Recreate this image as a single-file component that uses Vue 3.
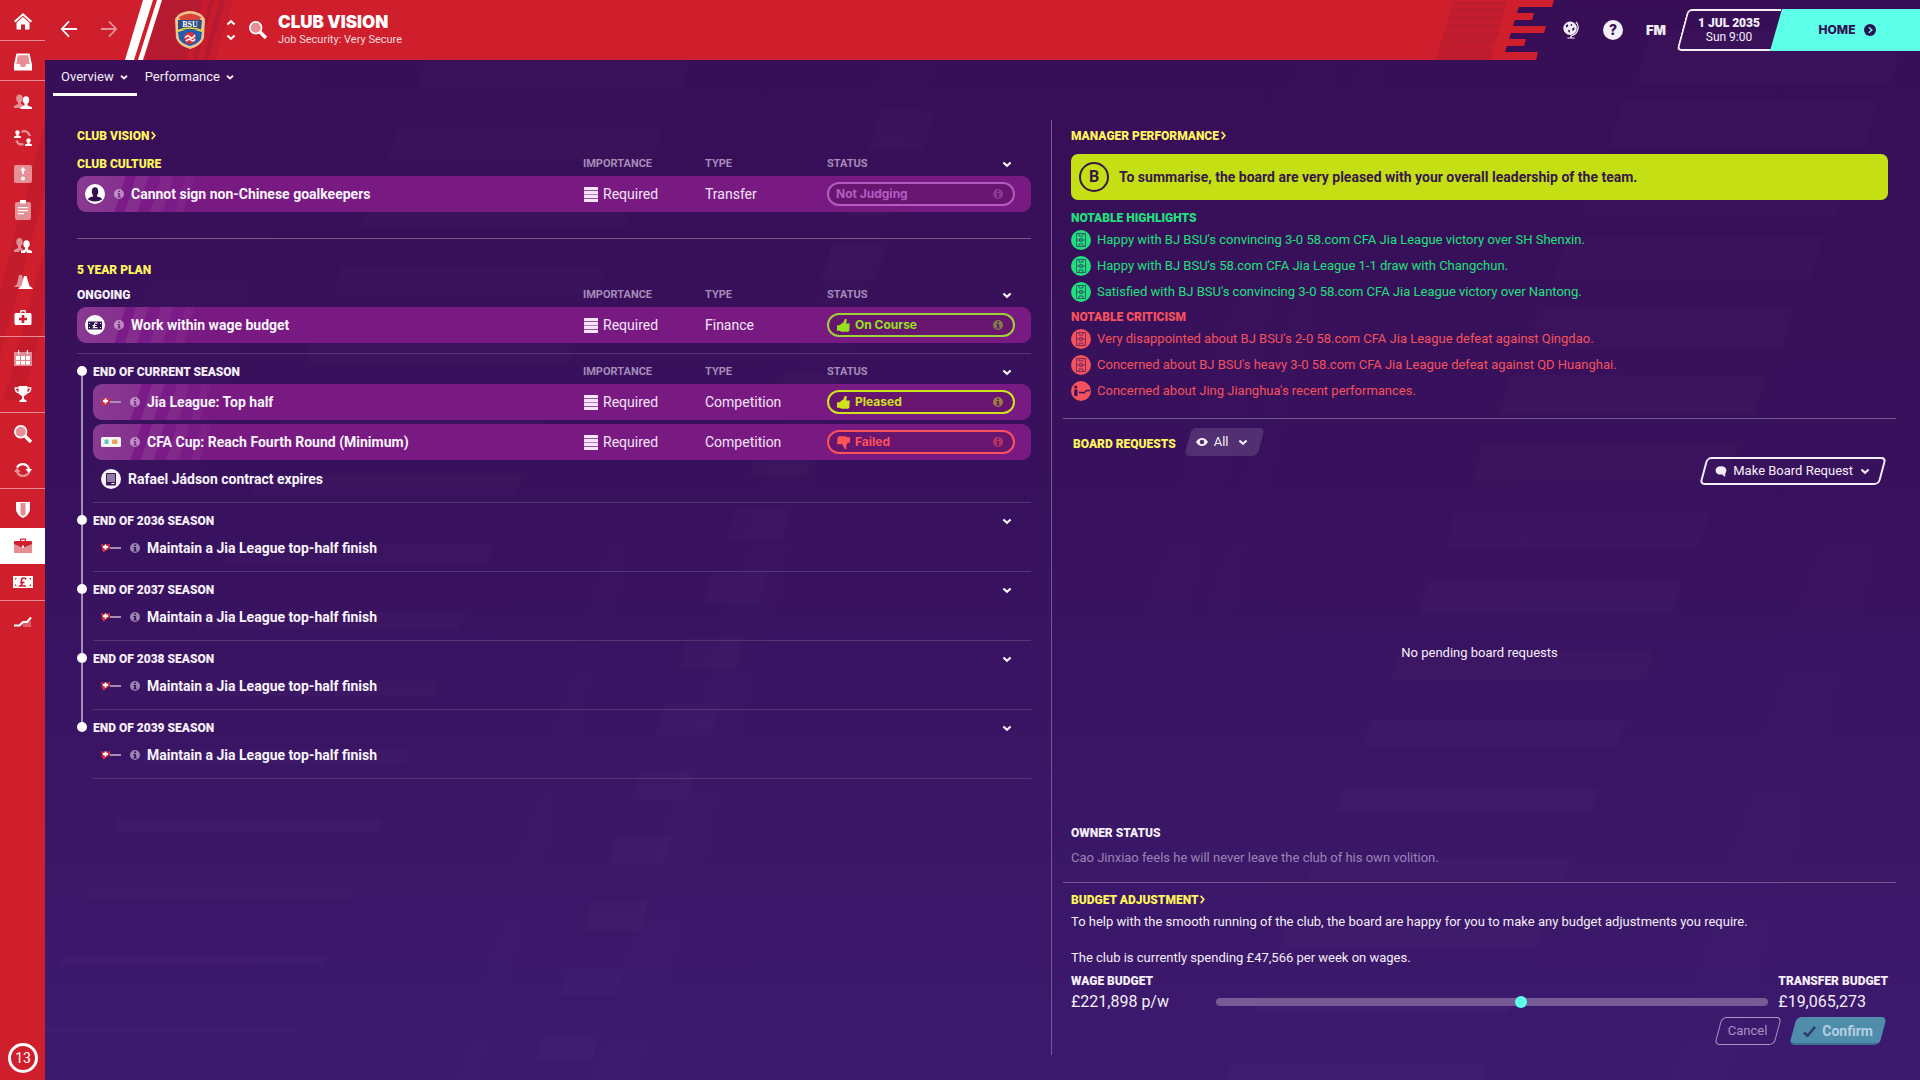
<script setup>
import { ref } from 'vue'

// icon bodies, drawn in a 20x20 box
const icons = {
  home: '<path d="M10 1 19 9l-1.300 1.500L10 3.800 2.300 10.500 1 9z"/><path d="M10 5l6.500 5.800V17.500h-4.500v-5H8v5H3.500v-6.700z"/>',
  inbox: '<path fill-rule="evenodd" d="M3.500 1.500h13l2.500 11v6H1v-6zM5 3.500 3.500 12H7c0 4 6 4 6 0h3.500L15 3.500z"/><path opacity=".5" d="M5 3.500h10L16.500 12H13c0 4-6 4-6 0H3.500z"/>',
  people: '<g opacity=".5"><ellipse cx="6.500" cy="6.500" rx="3.300" ry="4"/><path d="M5 9h3v3l3 1.500V16H1v-2l4-2z"/></g><ellipse cx="13" cy="8" rx="3.200" ry="3.800"/><path d="M11.500 11h3v2.500l4.500 1.700V17H7.500v-1.800l4-1.700z"/>',
  swap: '<circle cx="4.500" cy="4.500" r="2.200"/><path d="M3.500 6h2v1.500L8 8.500V10H1V8.500l2.500-1z"/><circle cx="15.500" cy="12.500" r="2.200"/><path d="M14.500 14h2v1.500l2.500 1V18h-7v-1.500l2.500-1z"/><path d="M8.500 4c4-2 7 0 8.500 4M10.500 16c-4 1.500-6-1-7-3.500" fill="none" stroke="currentColor" stroke-width="2.200" opacity=".5"/>',
  tactic: '<rect x="1" y="1" width="18" height="18" rx="2" opacity=".5"/><path d="M10 3l3 3.500h-2V10H9V6.500H7z"/><circle cx="10" cy="14.500" r="2"/>',
  report: '<rect x="2" y="2" width="16" height="18" rx="2" opacity=".5"/><rect x="7" y="0" width="6" height="3.500"/><path d="M5 7h10v1.200H5zM5 10h10v1.200H5zM5 13h6v1.200H5z"/>',
  staff: '<g opacity=".5"><ellipse cx="6.500" cy="6" rx="3.200" ry="4"/><path d="M5 9h3v3l2 1-1 3-2-2-1 2H1v-2l4-2z"/></g><ellipse cx="13.500" cy="8" rx="3.200" ry="3.800"/><path d="M12 11h3v2.500l4 1.500v2h-5l-1-2-1 2H8v-2l4-1.500z"/>',
  training: '<path opacity=".5" d="M6 3h3l2 9-3 3H1l3-3z"/><path d="M11 4h2.500l3 10 3 2v1H5.500v-1l3-2z"/>',
  medical: '<path fill-rule="evenodd" d="M7 5V3.500Q7 2 8.500 2h3Q13 2 13 3.500V5h4q1.500 0 1.500 1.500v9Q18.500 17 17 17H3q-1.500 0-1.500-1.500v-9Q1.500 5 3 5zm1.200 0h3.600V3.500H8.200zM8.700 7v2.700H6v2.600h2.700V15h2.600v-2.700H14V9.700h-2.700V7z"/>',
  calendar: '<path opacity=".5" d="M1 4h18v14H1z"/><path d="M5 2h1.200v4H5zM13.800 2H15v4h-1.200zM3 8h4v4H3zM8 8h4v4H8zM13 8h4v4h-4zM3 13h4v3.500H3zM8 13h4v3.500H8zM13 13h4v3.500h-4z"/>',
  trophy: '<path d="M5.500 2h9v5q0 4-3.500 5v3l2.500 1.500V18h-7v-1.500L9 15v-3Q5.500 11 5.500 7z"/><path d="M5.500 4H2.300Q2 8 6.500 9M14.500 4h3.200Q18 8 13.500 9" fill="none" stroke="currentColor" stroke-width="1.400"/>',
  search: '<circle cx="7.700" cy="7.700" r="5" opacity=".5"/><path d="M12 12l6 6" stroke="currentColor" stroke-width="3.400"/><circle cx="7.700" cy="7.700" r="5.800" fill="none" stroke="currentColor" stroke-width="1.800"/>',
  refresh: '<path d="M4 7.500C7 2.500 14 3 16 9" fill="none" stroke="currentColor" stroke-width="2.200"/><path d="M12.500 9H19l-3 4.500z"/><g opacity=".5"><path d="M16 12.500C13 17.500 6 17 4 11.500" fill="none" stroke="currentColor" stroke-width="2.200"/><path d="M1 12h6.500L4 7.500z"/></g>',
  shield: '<path d="M3 2h14v8q-1 5-7 8-6-3-7-8z"/><path d="M7.500 3h5v11.500L10 16l-2.500-1.500z" fill="#e68a93"/>',
  briefcase: '<path opacity=".5" d="M1 7l9 5 9-5v10H1z"/><path fill-rule="evenodd" d="M7 5V3.500Q7 2.500 8 2.500h4q1 0 1 1V5h5q1 0 1 1v2l-8 3.500V9.500H9v2L1 8V6q0-1 1-1zm1.200 0h3.600V3.700H8.200z"/>',
  money: '<path fill-rule="evenodd" d="M0 4h20v12H0zM2 6v2l2-2zm0 8h2l-2-2zM18 6h-2l2 2zm0 8v-2l-2 2z"/><path d="M13 7.500Q12.500 6 10.700 6 8.300 6 8.500 8.500L9 11q.2 2-1.500 3H13M7 10.500h4.500" fill="none" stroke="#cf1e2c" stroke-width="1.700"/>',
  chart: '<path opacity=".3" d="M10 9h8v6h-8z"/><path d="M1 13.500h5.500L10 10h4l4-4.500" fill="none" stroke="currentColor" stroke-width="2.200"/>',
  chevron: '<path d="M4 7.500 10 13l6-5.500" fill="none" stroke="currentColor" stroke-width="3.400"/>',
  more: '<path d="M6 2l7 8-7 8" fill="none" stroke="currentColor" stroke-width="3.600"/>',
  back: '<path d="M19 10H2M10 1.500 2 10l8 8.500" fill="none" stroke="currentColor" stroke-width="2"/>',
  forward: '<path d="M1 10h17M10 1.500 18 10l-8 8.500" fill="none" stroke="currentColor" stroke-width="2"/>',
  info: '<path fill-rule="evenodd" d="M10 0a10 10 0 1 0 0 20 10 10 0 0 0 0-20zM8.300 3h3.800v3H8.300zM6.500 8h5.600v7h1.400v2H6.500v-2h1.800v-5H6.500z"/>',
  bars: '<path d="M0 0h20v4.400H0zM0 5.200h20v4.400H0zM0 10.400h20v4.400H0zM0 15.600h20V20H0z"/>',
  thumbUp: '<path d="M0 9.500h3.500L10 5l2-5h2.500l.5 2-1 5h5.500L19 18l-2 1.500H7L4 18H0z"/>',
  thumbDown: '<path d="M20 10.500h-3.500L14 15l1 5h-3l-4-7.500H1L0 11 1 2l2-1.500h10L16 2h4z"/>',
  eye: '<path fill-rule="evenodd" d="M0 10Q4 3.500 10 3.500T20 10q-4 6.500-10 6.500T0 10zm10-3.800a3.800 3.800 0 1 0 0 7.600 3.800 3.800 0 0 0 0-7.600z"/>',
  bubble: '<path d="M10 2c6 0 9 3 9 7q0 3-2 5v6l-5-4H10c-6 0-9-3-9-7s3-7 9-7z"/>',
  check: '<path d="M1.500 11.500 7 16.500 18.500 3" fill="none" stroke="currentColor" stroke-width="4"/>',
  globe: '<path fill-rule="evenodd" d="M9 .5a7.500 7.500 0 1 0 0 15 7.500 7.500 0 0 0 0-15zM4 5l2.500-1.500.5 2L5 7.500zm6-2 1.500 1-.5 1.500-1.500-.5zM7 9.500l2 1-.5 2.500-1.500-1zM11.500 8l2.500-1-.5 3-2 1z"/><path d="M15.500 1q4 4.500 1.500 10-2 4.500-7 5.500" fill="none" stroke="currentColor" stroke-width="1.400"/><path d="M9.300 16h1.400v2.200H14v1.300H6v-1.300h3.300z"/>',
  person: '<circle cx="10" cy="10" r="10" fill="#fff"/><ellipse cx="10" cy="7.500" rx="3.200" ry="4.300" fill="#33104f"/><path d="M8 10h4v2.500q5 1 5 3-3 2-7 2t-7-2q0-2 5-3z" fill="#33104f"/>',
  wage: '<circle cx="10" cy="10" r="10" fill="#fff"/><path d="M3 6.500h14v8H3z" fill="#33104f"/><path d="M12.500 8.300q-3-1.300-3 1.200 0 2-1 3.200h4M7.500 10.500h4" fill="none" stroke="#fff" stroke-width="1.200"/><path d="M4.500 8v1M4.500 12v1M15.500 8v1M15.500 12v1" stroke="#fff"/>',
  contract: '<circle cx="10" cy="10" r="10" fill="#f8f4fa"/><rect x="5" y="4" width="10" height="12.500" rx="1" fill="#3a1659"/><path d="M6 5h8v8H6z" fill="#8f7ba6"/><path d="M10.500 14.500h3" stroke="#fff"/>',
  league: '<path d="M0 6l3.500 1L9 6v4l-5 3-1 2-2-3z" fill="#d5303c"/><path d="M4.500 6.500v5M2 9h5" stroke="#fff" stroke-width="1.800"/><path d="M9 10h11" stroke="#b19ac0" stroke-width="1.800"/>',
  cup: '<rect x="0" y="5" width="20" height="10" rx="1.500" fill="#f6f4f4"/><rect x="3.500" y="7.500" width="4" height="4.500" rx="1" fill="#5cc7bd"/><rect x="11" y="7.500" width="5.500" height="4.500" rx="1" fill="#e9a461"/>',
  pitch: '<circle cx="10" cy="10" r="10"/><g fill="none" stroke="#37105a" stroke-width="1" opacity=".6"><path d="M5.500 3.500h9v13h-9zM5.500 10h9M8 3.500V6h4V3.500M8 16.500V14h4v2.500"/><circle cx="10" cy="10" r="1.800"/></g>',
  form: '<circle cx="10" cy="10" r="10"/><g fill="#37105a"><circle cx="4.800" cy="6" r="1.600"/><path d="M3.200 8.500h3.300V15H3.200z"/></g><path d="M8 11.500h3l2 .500 2.500-2.500H19" fill="none" stroke="#37105a" stroke-width="1.300"/>'
}

const navGroups = [
  ['home'],
  ['inbox'],
  ['people', 'swap', 'tactic', 'report', 'staff', 'training', 'medical'],
  ['calendar', 'trophy'],
  ['search', 'refresh'],
  ['shield', 'briefcase', 'money'],
  ['chart']
]

const maintain = { icon: 'league', info: true, name: 'Maintain a Jia League top-half finish' }

const sections = [
  {
    heading: 'CLUB VISION',
    link: true,
    groups: [
      {
        title: 'CLUB CULTURE', columns: true, accent: true,
        goals: [{ icon: 'person', info: true, name: 'Cannot sign non-Chinese goalkeepers', importance: 'Required', type: 'Transfer', status: 'Not Judging', tone: 'idle' }]
      }
    ]
  },
  {
    heading: '5 YEAR PLAN',
    groups: [
      {
        title: 'ONGOING', columns: true,
        goals: [{ icon: 'wage', info: true, name: 'Work within wage budget', importance: 'Required', type: 'Finance', status: 'On Course', tone: 'course', thumb: 'thumbUp' }]
      },
      {
        title: 'END OF CURRENT SEASON', columns: true, season: true,
        goals: [
          { icon: 'league', info: true, name: 'Jia League: Top half', importance: 'Required', type: 'Competition', status: 'Pleased', tone: 'pleased', thumb: 'thumbUp' },
          { icon: 'cup', info: true, name: 'CFA Cup: Reach Fourth Round (Minimum)', importance: 'Required', type: 'Competition', status: 'Failed', tone: 'failed', thumb: 'thumbDown' },
          { icon: 'contract', name: 'Rafael Jádson contract expires' }
        ]
      },
      { title: 'END OF 2036 SEASON', season: true, goals: [maintain] },
      { title: 'END OF 2037 SEASON', season: true, goals: [maintain] },
      { title: 'END OF 2038 SEASON', season: true, goals: [maintain] },
      { title: 'END OF 2039 SEASON', season: true, goals: [maintain] }
    ]
  }
]

const feedback = [
  {
    title: 'NOTABLE HIGHLIGHTS', tone: 'good',
    items: [
      { icon: 'pitch', text: "Happy with BJ BSU's convincing 3-0 58.com CFA Jia League victory over SH Shenxin." },
      { icon: 'pitch', text: "Happy with BJ BSU's 58.com CFA Jia League 1-1 draw with Changchun." },
      { icon: 'pitch', text: "Satisfied with BJ BSU's convincing 3-0 58.com CFA Jia League victory over Nantong." }
    ]
  },
  {
    title: 'NOTABLE CRITICISM', tone: 'bad',
    items: [
      { icon: 'pitch', text: "Very disappointed about BJ BSU's 2-0 58.com CFA Jia League defeat against Qingdao." },
      { icon: 'pitch', text: "Concerned about BJ BSU's heavy 3-0 58.com CFA Jia League defeat against QD Huanghai." },
      { icon: 'form', text: "Concerned about Jing Jianghua's recent performances." }
    ]
  }
]

const filter = ref('All')
const budget = ref(554)

// slanted bars that step down and to the left behind the panels
const slant = (x, y, w, h) => `M${x} ${y}h${w}l${-h * 0.28} ${h}h${-w}z`
const bars = []
for (let i = 0; i < 16; i++) {
  bars.push(slant(1651 - 28 * i, 30 + 69 * i, 255, 52 - 2.5 * i))
  bars.push(slant(425 - 28 * i, 60 + 69 * i, 265, 34 - 2 * i))
  bars.push(slant(880 - 24 * i, 110 + 66 * i, 56, 40 - i))
}
const shapes = bars.join('')
const streaks = 'M210 60h110L190 520H80zM885 60h50L640 1080h-50zM1300 60h40L1180 640h-40zM1360 60h24l-160 580h-24zM1830 500h60l-160 580h-60zM620 500h24L480 1080h-24z'
</script>

<template>
  <div class="app">
    <svg class="backdrop" viewBox="0 0 1920 1080" preserveAspectRatio="xMidYMid slice">
      <path :d="shapes" />
      <path :d="streaks" opacity=".6" />
    </svg>

    <nav class="sidebar">
      <div class="nav-group" v-for="(group, i) in navGroups" :key="i">
        <button v-for="name in group" :key="name" :class="{ active: name === 'briefcase' }" :aria-label="name">
          <svg viewBox="0 0 20 20" v-html="icons[name]"></svg>
        </button>
      </div>
      <div class="timer">13</div>
    </nav>

    <div class="page">
      <header>
        <div class="club-bar">
          <button class="arrow" aria-label="Back"><svg viewBox="0 0 20 20" v-html="icons.back"></svg></button>
          <button class="arrow dim" aria-label="Forward"><svg viewBox="0 0 20 20" v-html="icons.forward"></svg></button>
          <svg class="slashes" viewBox="0 0 110 60">
            <path d="M37 0h70L90 60H19z" fill="#b51a31" />
            <path d="M78 0h7L68 60h-7zM89 0h6L78 60h-6zM100 0h7L90 60h-7z" fill="#c71c2d" />
            <path d="M18 0h10L9 60H0zM32 0h5L18 60h-5z" fill="#fff" />
          </svg>
          <svg class="crest" viewBox="0 0 32 40">
            <path d="M4 5Q16-3 28 5l3 4-1 19q-3 8-14 11Q5 36 2 28L1 9z" fill="#f0c48a" />
            <path d="M5 7q11-7 22 0l-1 3H6z" fill="#d9453b" />
            <path d="M4 10h24l-1 10H4z" fill="#2b4f86" />
            <path d="M4 22q12-5 24 0l-1 7q-3 5-11 7-8-2-11-7z" fill="#1f5fae" />
            <path d="M3 21q13-6 26 0" fill="none" stroke="#e9d533" stroke-width="1.500" />
            <circle cx="16" cy="28" r="6" fill="#dd2f35" />
            <path d="M11 28q3-4 5-1t5-2M12 31q3-3 5-1t4-1" fill="none" stroke="#fff" stroke-width="1.500" />
            <text x="16" y="17" text-anchor="middle">BSU</text>
          </svg>
          <div class="stepper">
            <button class="up" aria-label="Previous club"><svg viewBox="0 0 20 20" v-html="icons.chevron"></svg></button>
            <button aria-label="Next club"><svg viewBox="0 0 20 20" v-html="icons.chevron"></svg></button>
          </div>
          <button class="find" aria-label="Search"><svg viewBox="0 0 20 20" v-html="icons.search"></svg></button>
          <div>
            <h1>CLUB VISION</h1>
            <p class="security">Job Security: Very Secure</p>
          </div>
        </div>
        <svg class="torn-edge" viewBox="0 0 134 60">
          <path d="M0 0h134l-2 7h-33l-2 6h17l-2 7h-17l-2 6h33l-2 7h-33l-2 6h17l-2 7h-17l-2 6h33l-2 8H0z" fill="#cf1e2c" />
          <path d="M33 1h54L70 60H16z" fill="#c51d2d" />
          <path d="M33 1h54l-1 4H32zM31 8h54l-1 5H30zM29 16h54l-1 5H28zM27 24h54l-1 5H26zM25 32h54l-2 5H23zM23 39h53l-1 5H21zM20 47h53l-1 5H19zM18 54h53l-2 6H16z" fill="#bd1d2e" />
        </svg>
        <div class="tools">
          <button class="globe" aria-label="World"><svg viewBox="0 0 20 20" v-html="icons.globe"></svg></button>
          <button class="help">?</button>
          <button class="fm">FM</button>
        </div>
        <div class="date">
          <strong>1 JUL 2035</strong>
          <span>Sun 9:00</span>
        </div>
        <button class="continue">HOME
          <svg viewBox="0 0 20 20"><circle cx="10" cy="10" r="10" /><path d="M8 5.500l5 4.500-5 4.500" fill="none" stroke="#5effe8" stroke-width="2.500" /></svg>
        </button>
      </header>

      <div class="tabs">
        <a href="#" class="current">Overview <svg viewBox="0 0 20 20" v-html="icons.chevron"></svg></a>
        <a href="#">Performance <svg viewBox="0 0 20 20" v-html="icons.chevron"></svg></a>
      </div>

      <main>
        <div class="vision">
          <section v-for="section in sections" :key="section.heading">
            <h2 :class="{ spaced: section.link }">
              <a v-if="section.link" href="#">{{ section.heading }} <svg viewBox="0 0 20 20" v-html="icons.more"></svg></a>
              <template v-else>{{ section.heading }}</template>
            </h2>
            <div class="group" :class="{ season: group.season }" v-for="group in section.groups" :key="group.title">
              <div class="rail" v-if="group.season"><i></i><b></b><i></i></div>
              <table>
                <thead>
                  <tr>
                    <th class="title" :class="{ accent: group.accent }">{{ group.title }}</th>
                    <th>{{ group.columns ? 'IMPORTANCE' : '' }}</th>
                    <th>{{ group.columns ? 'TYPE' : '' }}</th>
                    <th class="last">{{ group.columns ? 'STATUS' : '' }}
                      <button :aria-label="'Collapse ' + group.title"><svg viewBox="0 0 20 20" v-html="icons.chevron"></svg></button>
                    </th>
                  </tr>
                </thead>
                <tbody>
                  <tr v-for="goal in group.goals" :key="goal.name" :class="{ card: goal.status }">
                    <td class="name">
                      <svg class="badge" viewBox="0 0 20 20" v-html="icons[goal.icon]"></svg>
                      <svg class="info" v-if="goal.info" viewBox="0 0 20 20" v-html="icons.info"></svg>
                      <span>{{ goal.name }}</span>
                    </td>
                    <template v-if="goal.status">
                      <td><svg class="level" viewBox="0 0 20 20" preserveAspectRatio="none" v-html="icons.bars"></svg>{{ goal.importance }}</td>
                      <td>{{ goal.type }}</td>
                      <td>
                        <div class="status" :class="goal.tone">
                          <svg class="thumb" v-if="goal.thumb" viewBox="0 0 20 20" v-html="icons[goal.thumb]"></svg>
                          {{ goal.status }}
                          <svg class="info" viewBox="0 0 20 20" v-html="icons.info"></svg>
                        </div>
                      </td>
                    </template>
                  </tr>
                </tbody>
              </table>
            </div>
          </section>
        </div>

        <div class="board">
          <section class="performance">
            <h2><a href="#">MANAGER PERFORMANCE <svg viewBox="0 0 20 20" v-html="icons.more"></svg></a></h2>
            <div class="summary">
              <span class="grade">B</span>
              To summarise, the board are very pleased with your overall leadership of the team.
            </div>
            <div class="feedback" :class="block.tone" v-for="block in feedback" :key="block.title">
              <h3>{{ block.title }}</h3>
              <p v-for="item in block.items" :key="item.text">
                <svg viewBox="0 0 20 20" v-html="icons[item.icon]"></svg>{{ item.text }}
              </p>
            </div>
          </section>

          <section class="requests">
            <div class="requests-head">
              <h2>BOARD REQUESTS</h2>
              <label class="filter">
                <svg viewBox="0 0 20 20" v-html="icons.eye"></svg>
                <select v-model="filter" aria-label="Filter board requests"><option>All</option></select>
                <svg viewBox="0 0 20 20" v-html="icons.chevron"></svg>
              </label>
            </div>
            <button class="outline make">
              <svg viewBox="0 0 20 20" v-html="icons.bubble"></svg>
              Make Board Request
              <svg viewBox="0 0 20 20" v-html="icons.chevron"></svg>
            </button>
            <p class="empty">No pending board requests</p>
          </section>

          <section class="owner">
            <h3>OWNER STATUS</h3>
            <p>Cao Jinxiao feels he will never leave the club of his own volition.</p>
          </section>

          <section class="budget">
            <h2><a href="#">BUDGET ADJUSTMENT <svg viewBox="0 0 20 20" v-html="icons.more"></svg></a></h2>
            <p>To help with the smooth running of the club, the board are happy for you to make any budget adjustments you require.</p>
            <p>The club is currently spending £47,566 per week on wages.</p>
            <div class="balance">
              <label for="budget">WAGE BUDGET</label>
              <span></span>
              <label for="budget">TRANSFER BUDGET</label>
              <output>£221,898 p/w</output>
              <input id="budget" type="range" min="0" max="1000" v-model="budget">
              <output>£19,065,273</output>
            </div>
            <div class="actions">
              <button class="outline cancel">Cancel</button>
              <button class="confirm"><svg viewBox="0 0 20 20" v-html="icons.check"></svg>Confirm</button>
            </div>
          </section>
        </div>
      </main>
    </div>
  </div>
</template>

<style>
body {
  margin: 0;
  background: #3b186a;
}
</style>

<style scoped>
.app {
  position: relative;
  display: flex;
  min-height: 100vh;
  font-family: Roboto, 'Liberation Sans', sans-serif;
  font-size: 13px;
  line-height: 18px;
  color: #f4eef8;
  background: linear-gradient(#370e56, #38115d 45%, #3c1a6e);
}

.backdrop {
  position: absolute;
  inset: 0;
  width: 100%;
  height: 100%;
  fill: rgba(255, 255, 255, 0.017);
}

svg {
  flex: none;
  fill: currentColor;
}

h1, h2, h3, p {
  margin: 0;
}

h2, h3 {
  font: 900 12px/18px Roboto, sans-serif;
}

h2 {
  line-height: 20px;
  color: #fff45c;
}

h2 svg {
  width: 9px;
  height: 9px;
  margin-left: -3px;
}

a {
  color: inherit;
  text-decoration: none;
}

button {
  border: none;
  padding: 0;
  background: none;
  color: inherit;
  font: inherit;
  cursor: pointer;
}

/* sidebar */
.sidebar {
  position: relative;
  display: flex;
  flex-direction: column;
  flex: none;
  width: 45px;
  background: linear-gradient(105deg, transparent 50%, rgba(160, 20, 40, 0.25) 52% 62%, transparent 64% 72%, rgba(160, 20, 40, 0.25) 74% 84%, transparent 86%) 0 0 / 100% 400px no-repeat #cf1e2c;
  color: #fff;
}

.nav-group {
  padding-top: 3px;
  border-top: 1px solid #e88a92;
}

.nav-group:first-child {
  border-color: transparent;
}

.nav-group button {
  display: flex;
  align-items: center;
  justify-content: center;
  width: 100%;
  height: 36px;
}

.nav-group svg {
  width: 20px;
  height: 20px;
}

.nav-group .active {
  background: #fff;
  color: #cf1e2c;
}

.timer {
  width: 24px;
  margin: auto auto 7px 8px;
  border: 3px solid #fff;
  border-radius: 50%;
  font-size: 14px;
  line-height: 24px;
  text-align: center;
}

.page {
  position: relative;
  display: flex;
  flex-direction: column;
  flex: 1;
  min-width: 0;
}

/* header */
header {
  display: flex;
  align-items: center;
  height: 60px;
}

.club-bar {
  display: flex;
  align-items: center;
  flex: 1;
  height: 60px;
  padding-left: 14px;
  background: #cf1e2c;
  color: #fff;
}

.arrow {
  width: 20px;
  height: 20px;
  margin-right: 20px;
}

.arrow svg {
  width: 18px;
  height: 18px;
}

.dim {
  margin-right: 6px;
  opacity: 0.5;
}

.slashes {
  width: 110px;
  height: 60px;
}

.crest {
  width: 32px;
  height: 40px;
  margin: 0 19px 0 -61px;
}

.crest text {
  font: 700 8px 'Liberation Serif', serif;
  fill: #fff;
}

.stepper {
  display: flex;
  flex-direction: column;
  gap: 2px;
  width: 12px;
}

.stepper button {
  height: 12px;
}

.stepper svg,
.outline svg,
.filter svg,
.last svg {
  display: block;
  width: 12px;
  height: 12px;
}

.up svg {
  transform: rotate(180deg);
}

.find {
  margin: 0 10px 0 11px;
}

.find svg {
  display: block;
  width: 20px;
  height: 20px;
}

h1 {
  font: 900 17px/20px Inter, sans-serif;
}

.security {
  font-size: 11px;
  line-height: 16px;
  color: #f7dadd;
}

.torn-edge {
  width: 134px;
  height: 60px;
}

.tools {
  display: flex;
  align-items: center;
  gap: 23px;
  padding: 0 16px 0 8px;
}

.globe svg {
  display: block;
  width: 18px;
  height: 20px;
}

.help {
  width: 20px;
  height: 20px;
  border-radius: 50%;
  background: #f4eef8;
  color: #37105a;
  font: 800 14px/20px Inter, sans-serif;
}

.fm {
  font: 900 13px/20px Inter, sans-serif;
}

.date {
  position: relative;
  display: flex;
  flex-direction: column;
  align-items: center;
  justify-content: center;
  width: 94px;
  height: 42px;
  margin-right: -6px;
  font-size: 12px;
  line-height: 14px;
}

.date strong {
  font: 900 12px/14px Roboto, sans-serif;
}

.date::before,
.filter::before,
.outline::before,
.confirm::before {
  content: '';
  position: absolute;
  inset: 0;
  box-sizing: border-box;
  border: 2px solid #f4eef8;
  border-radius: 5px;
  transform: skewX(-15deg);
}

.date::before {
  border-right: none;
  border-radius: 5px 0 0 5px;
}

.continue {
  position: relative;
  display: flex;
  align-items: center;
  justify-content: center;
  gap: 9px;
  width: 150px;
  height: 42px;
  padding-left: 5px;
  background: #5effe8;
  clip-path: polygon(12px 0, 100% 0, 100% 100%, 0 100%);
  color: #2d1054;
  font: 800 12px/20px Inter, sans-serif;
}

.continue svg {
  width: 12px;
  height: 12px;
}

/* tabs */
.tabs {
  display: flex;
  height: 60px;
  padding-left: 8px;
}

.tabs a {
  display: flex;
  align-items: center;
  gap: 5px;
  height: 32px;
  padding: 1px 8px 0 8px;
  border-bottom: 3px solid transparent;
}

.tabs svg {
  width: 10px;
  height: 10px;
}

.tabs .current {
  border-color: #fff;
}

/* club vision list */
main {
  display: grid;
  grid-template-columns: minmax(0, 1007fr) minmax(0, 868fr);
  flex: 1;
  padding-bottom: 25px;
}

.vision {
  padding: 6px 20px 0 32px;
  border-right: 1px solid #76588c;
}

.vision section + section {
  margin-top: 26px;
  padding-top: 21px;
  border-top: 1px solid #76588c;
}

.vision h2 {
  margin-bottom: 3px;
}

.vision .spaced {
  margin-bottom: 6px;
}

.group {
  display: flex;
}

.group:not(.season) + .season {
  margin-top: 10px;
  border-top: 1px solid #573574;
}

.rail {
  display: flex;
  flex-direction: column;
  align-items: center;
  width: 10px;
  margin-right: 6px;
}

.rail i {
  width: 2px;
  height: 12px;
  background: #a58fb8;
}

.rail b {
  width: 10px;
  height: 10px;
  border-radius: 50%;
  background: #fff;
}

.rail i:last-child {
  flex: 1;
}

.group:not(.season) + .season .rail i:first-child,
.season:last-child .rail i:last-child {
  background: none;
}

table {
  display: block;
  flex: 1;
}

.season table {
  padding: 6px 0 8px;
  border-bottom: 1px solid #573574;
}

thead, tbody {
  display: block;
}

tr {
  display: grid;
  grid-template-columns: 1fr 122px 122px 204px;
  align-items: center;
  height: 30px;
}

thead tr {
  height: 24px;
}

th {
  padding: 0;
  text-align: left;
  font: 700 11px/18px Roboto, sans-serif;
  color: #a58cb8;
}

.title {
  font: 900 12px/18px Roboto, sans-serif;
  color: #f4eef8;
}

.accent {
  color: #fff45c;
}

.last {
  display: flex;
  justify-content: space-between;
  padding-right: 18px;
}

.last button {
  margin-left: auto;
  color: #fff;
}

.card {
  height: 36px;
  border-radius: 9px;
  background:
    linear-gradient(107deg, transparent 46px, #7b1b88 47px 56px, transparent 57px 68px, #7b1b88 69px 80px, transparent 81px 92px, #7b1b88 93px 104px, transparent 105px 112px, #791a83 113px),
    linear-gradient(90deg, #8a3a93, #7b1b85 140px);
  color: #f4e4f6;
}

.card + tr {
  margin-top: 4px;
}

td {
  display: flex;
  align-items: center;
  padding: 0;
  font-size: 14px;
}

.name {
  padding-left: 8px;
  font-weight: 700;
  color: #f8f4fb;
}

.badge {
  width: 20px;
  height: 20px;
}

.name span {
  margin-left: 7px;
}

.info {
  width: 10px;
  height: 10px;
  opacity: 0.5;
}

.name .info {
  margin-left: 9px;
}

.level {
  width: 14px;
  height: 15px;
  margin: 0 5px 0 1px;
}

.status {
  display: flex;
  align-items: center;
  gap: 5px;
  box-sizing: border-box;
  width: 188px;
  height: 24px;
  padding: 0 10px 0 7px;
  border: 2px solid;
  border-radius: 12px;
  background: #681570;
  font: 700 12px/18px Inter, sans-serif;
}

.status .info {
  margin-left: auto;
}

.thumb {
  width: 13px;
  height: 13px;
  margin-left: 1px;
}

.idle {
  color: #b25cc0;
}

.course {
  border-color: #9ed03a;
  color: #96e31c;
}

.pleased {
  color: #cfe31c;
}

.failed {
  color: #fd5259;
}

/* right column */
.board {
  display: flex;
  flex-direction: column;
  padding: 6px 32px 0 19px;
}

.board section + section {
  margin: 0 -8px;
  padding: 0 8px;
  border-top: 1px solid #76588c;
}

.summary {
  display: flex;
  align-items: center;
  gap: 10px;
  height: 46px;
  margin: 8px 0 9px;
  padding-left: 8px;
  border-radius: 7px;
  background: #c4e014;
  color: #371748;
  font-size: 14px;
  font-weight: 700;
}

.grade {
  width: 26px;
  border: 2px solid;
  border-radius: 50%;
  font: 700 16px/26px Roboto, sans-serif;
  text-align: center;
}

.feedback {
  margin-bottom: 3px;
}

.feedback p {
  display: flex;
  align-items: center;
  gap: 6px;
  height: 26px;
}

.feedback svg {
  width: 20px;
  height: 20px;
}

.good {
  color: #1fe07c;
}

.bad {
  margin-bottom: 14px;
  color: #f4525c;
}

.board .requests {
  display: flex;
  flex-direction: column;
  flex: 1;
  padding: 9px 8px 4px;
}

.requests-head {
  display: flex;
  align-items: center;
  gap: 12px;
  padding-left: 2px;
}

.requests-head h2 {
  padding-top: 3px;
}

.filter {
  position: relative;
  display: flex;
  align-items: center;
  gap: 6px;
  height: 28px;
  padding: 0 12px 0 8px;
}

.filter::before {
  border: none;
  background: rgba(255, 255, 255, 0.13);
}

.filter select {
  appearance: none;
  position: relative;
  border: none;
  background: none;
  color: inherit;
  font: inherit;
  padding: 0 2px 0 0;
}

.outline {
  position: relative;
  display: flex;
  align-items: center;
  gap: 6px;
  height: 28px;
  padding: 0 12px;
}

.make {
  align-self: flex-end;
  margin: 1px 5px 0 0;
}

.empty {
  margin: auto;
}

.board .owner {
  padding-bottom: 15px;
  border-top: none;
}

.owner p {
  margin-top: 7px;
  color: #9c83b5;
}

.board .budget {
  padding: 7px 8px 10px;
}

.budget p {
  margin: 3px 0 18px;
}

.budget p + p {
  margin: 0 0 5px;
}

.balance {
  display: grid;
  grid-template-columns: 145px 1fr auto;
  align-items: center;
}

.balance label {
  font: 900 12px/18px Roboto, sans-serif;
}

.balance label:nth-of-type(2),
.balance output:last-child {
  padding-left: 10px;
}

.balance output {
  font-size: 16px;
  line-height: 24px;
}

.balance input {
  appearance: none;
  width: 100%;
  height: 8px;
  margin: 0;
  border-radius: 4px;
  background: #765a95;
}

.balance input::-webkit-slider-thumb {
  appearance: none;
  width: 12px;
  height: 12px;
  border-radius: 50%;
  background: #5effe8;
}

.actions {
  display: flex;
  justify-content: flex-end;
  gap: 16px;
  margin: 3px 5px 0 0;
}

.cancel {
  padding: 0 10px;
  color: #a993c2;
}

.cancel::before {
  border-color: #a993c2;
  border-width: 1px;
}

.confirm {
  position: relative;
  display: flex;
  align-items: center;
  gap: 6px;
  height: 28px;
  padding: 0 10px;
  color: #b4cfe0;
  font-size: 14px;
  font-weight: 700;
  z-index: 0;
}

.confirm::before {
  z-index: -1;
  border: none;
  border-bottom: 2px solid #3d7090;
  background: #4f8dab;
}

.confirm svg {
  width: 13px;
  height: 13px;
  color: #2b3f70;
}
</style>
